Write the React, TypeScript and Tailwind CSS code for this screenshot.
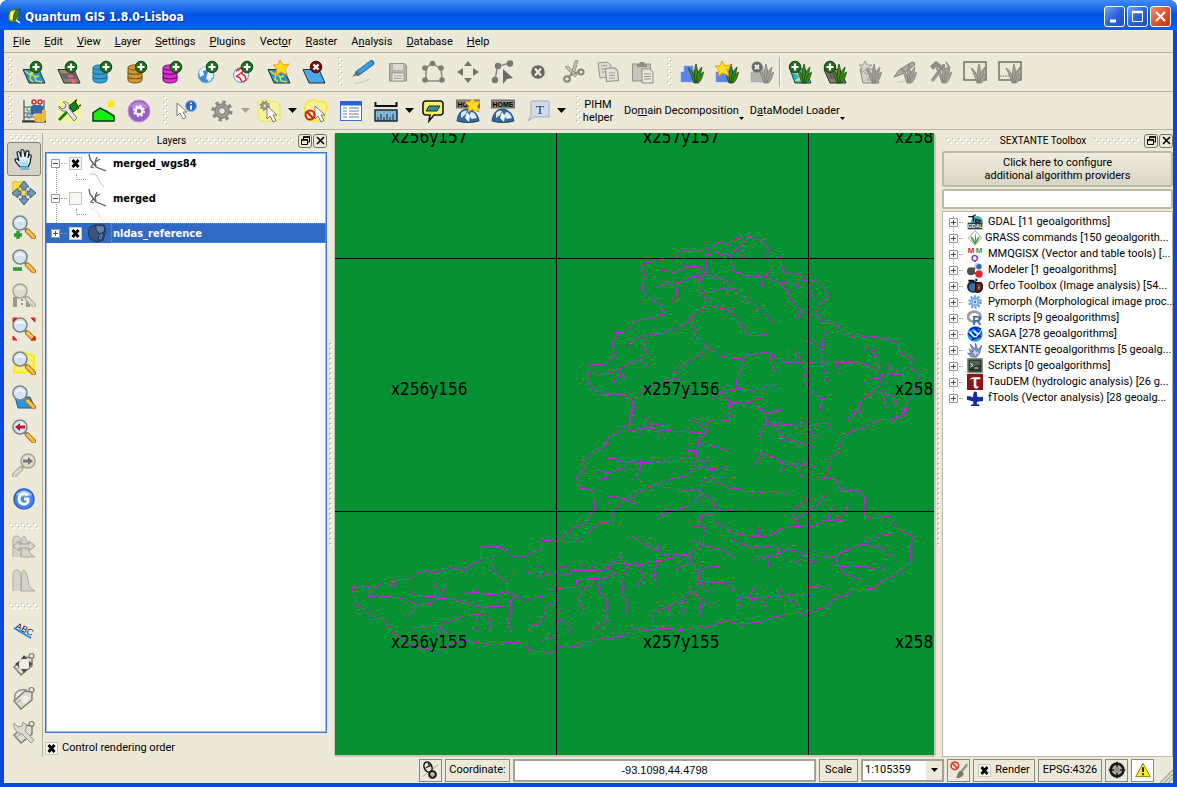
import React, { useState } from "react";

type Kids = { children?: React.ReactNode };

/* ---------- shared pieces ---------- */

function Svg({ children, s = 24 }: Kids & { s?: number }) {
  return (
    <svg width={s} height={s} viewBox="0 0 24 24" fill="none" aria-hidden="true" className="shrink-0">
      {children}
    </svg>
  );
}

function Grip({ id, vertical = false, cls }: { id: string; vertical?: boolean; cls: string }) {
  return (
    <svg className={cls} aria-hidden="true">
      <defs>
        <pattern id={id} width="6" height="6" patternUnits="userSpaceOnUse">
          <rect x="0" y="0" width="2" height="2" fill="#d0cdbf" />
          <rect x="1" y="1" width="2" height="2" fill="#fff" />
          <rect x="3" y="3" width="2" height="2" fill="#d0cdbf" />
          <rect x="4" y="4" width="2" height="2" fill="#fff" />
        </pattern>
      </defs>
      <rect width={vertical ? "6" : "100%"} height={vertical ? "100%" : "6"} fill={`url(#${id})`} />
    </svg>
  );
}

function SplitDots({ id }: { id: string }) {
  return (
    <svg className="h-[204px] w-1" aria-hidden="true">
      <defs>
        <pattern id={id} width="4" height="5" patternUnits="userSpaceOnUse">
          <rect x="0" y="0" width="2" height="2" fill="#b9b6a8" />
          <rect x="1" y="1" width="2" height="2" fill="#fff" />
        </pattern>
      </defs>
      <rect width="4" height="100%" fill={`url(#${id})`} />
    </svg>
  );
}

function Tool({ label, children }: Kids & { label: string }) {
  return (
    <button type="button" aria-label={label} className="flex h-[35px] w-[35px] shrink-0 items-center justify-center">
      {children}
    </button>
  );
}

function Arrow({ label, muted = false }: { label: string; muted?: boolean }) {
  return (
    <button type="button" aria-label={label} className="flex h-[35px] w-3 shrink-0 items-center justify-center">
      <svg width="9" height="5" viewBox="0 0 9 5" aria-hidden="true">
        <path d="M0 0h9L4.500 5z" fill={muted ? "#a5a294" : "#000"} />
      </svg>
    </button>
  );
}

function Tick({ label, defaultChecked, hidden = false }: { label: string; defaultChecked?: boolean; hidden?: boolean }) {
  return (
    <label className="flex items-center">
      <span className="relative flex h-[13px] w-[13px] shrink-0">
        <input
          type="checkbox"
          aria-label={label}
          defaultChecked={defaultChecked}
          className="peer h-[13px] w-[13px] appearance-none border border-[#c9c7ba] bg-[#f6f6f4]"
        />
        <svg viewBox="0 0 13 13" className="pointer-events-none absolute inset-0 hidden h-[13px] w-[13px] peer-checked:block" aria-hidden="true">
          <path d="M3.500 3l6 7M9.500 3l-6 7" stroke="#000" strokeWidth="2.800" />
        </svg>
      </span>
      {!hidden && <span className="pl-1">{label}</span>}
    </label>
  );
}

/* ---------- icon parts ---------- */

const Plus = ({ x = 14, y = 7 }: { x?: number; y?: number }) => (
  <g>
    <circle cx={x} cy={y} r="5.800" fill="#1f6e1f" stroke="#0f4a12" />
    <path d={`M${x - 3.5} ${y}h7M${x} ${y - 3.5}v7`} stroke="#fff" strokeWidth="2.200" />
  </g>
);

const Star = ({ x = 14, y = 8 }: { x?: number; y?: number }) => (
  <path
    transform={`translate(${x} ${y})`}
    d="M-1-8 2-3 8-4 4 1 6 7 0 4-5 7-4 1-8-3-3-3z"
    fill="#ffdf1e"
    stroke="#f49b10"
  />
);

const Sheet = ({ fill = "#3fa9e0" }: { fill?: string }) => (
  <path d="M1 9.500h16l6 13.500H7z" fill={fill} stroke="#20343c" />
);

const Vec = () => (
  <g>
    <Sheet fill="#2f93c9" />
    <path d="M3 11l4 3 3 0 3 3 1 4 6 1M9 14l-1 5 3 3M13 17l4-1M7 14l7-3" stroke="#d7e63c" strokeWidth="1.400" />
  </g>
);

const Ras = () => (
  <g>
    <Sheet fill="#8a7f6a" />
    <path d="M3 10h5l2 4H5z" fill="#b08d5c" />
    <path d="M9 10h4l6 13h-4z" fill="#e0688a" />
    <path d="M5 15h6l1 4H7zM15 13h4l2 4h-4z" fill="#6b5e78" />
    <path d="M13 18l8 0M4 14h15" stroke="#4f4a3e" />
  </g>
);

const Db = ({ a, b }: { a: string; b: string }) => (
  <g>
    <path d="M1 8v12c0 4 14 4 14 0V8z" fill={a} stroke={b} />
    <path d="M1 12c0 3 14 3 14 0M1 16.500c0 3 14 3 14 0" stroke={b} strokeWidth="1.200" />
    <ellipse cx="8" cy="7.500" rx="7" ry="2.600" fill={a} stroke={b} />
  </g>
);

const Grass = ({ c = "#3f8a1e", d = "#1c4a0c" }: { c?: string; d?: string }) => (
  <g fill={c} stroke={d} strokeWidth=".8">
    <path d="M14 23C12 18 11 13 8 8c4 2 7 7 7 15z" />
    <path d="M15 23C14 16 14 10 16 4c2 6 2 12 0 19z" />
    <path d="M16 23c0-7 2-12 6-16-1 5-2 11-5 16z" />
    <path d="M17 23c1-5 3-9 6.500-11-1 5-2 8-5 11z" />
  </g>
);

const gc = "#a3a297";
const gd = "#83827a";

const Glass = ({ muted = false, flip = false }: { muted?: boolean; flip?: boolean }) => (
  <g transform={flip ? "translate(24 0) scale(-1 1)" : undefined}>
    <path d="M12.500 13l3.500 3.500" stroke={muted ? "#a9a79b" : "#8b8b83"} strokeWidth="3" />
    <path d="M15.500 16l6 6" stroke={muted ? "#a3a195" : "#a36a14"} strokeWidth="5" strokeLinecap="round" />
    <path d="M15.500 16l6 6" stroke={muted ? "#d5d3c6" : "#f7b53c"} strokeWidth="3.200" strokeLinecap="round" />
    <path d="M15.500 15.200l5 5" stroke={muted ? "#e8e6da" : "#fde3a0"} strokeWidth="1" />
    <circle cx="8" cy="8" r="7" fill={muted ? "#dedccf" : "#d3e3f2"} stroke={muted ? "#a6a499" : "#7d8588"} strokeWidth="1.600" />
    <path d="M3 8c1-5 8-6 10-1-3-1-7-1-10 1z" fill={muted ? "#eceadf" : "#f4f9fd"} />
  </g>
);

const Globe = () => (
  <g>
    <circle cx="9" cy="15" r="8" fill="#3c8fd0" stroke="#8fb8da" />
    <path d="M2 12c2-4 5-5 8-5l-1 3-3 1 1 4-4 2zM11 12l5 0 0 5-4 5-3-4z" fill="#eaf4fb" />
  </g>
);

const Tag = () => (
  <g>
    <circle cx="19.500" cy="4" r="2.500" stroke="#7b7a72" strokeWidth="1.200" />
    <path d="M2 15L13 5l7 1 0 8-11 9z" fill="#dedcd0" stroke="#7b7a72" strokeWidth="1.400" />
    <path d="M2 15l7 7M4 18l10-9" stroke="#98968b" />
  </g>
);

const Home = () => (
  <g>
    <path d="M1 22c1-8 5-12 10-12s11 4 12 12c-6 2-16 2-22 0z" fill="#34689b" stroke="#234a74" />
    <path d="M5 14c3-3 5-3 6-2l-2 4-4 3zM15 13c3 0 5 3 6 6l-5 1-3-3z" fill="#dceaf5" />
    <path d="M11 13l3 4-1 6-4-4z" fill="#f5f9fc" />
    <rect x=".5" y="1" width="23" height="8" fill="#8d8b81" stroke="#6f6d64" />
    <text x="12" y="7.600" textAnchor="middle" fontSize="7" fontWeight="700" fontFamily="Liberation Sans, sans-serif" fill="#000">
      HOME
    </text>
  </g>
);

const Cursor = ({ x = 9, y = 8 }: { x?: number; y?: number }) => (
  <path transform={`translate(${x} ${y})`} d="M0 0v13l3-3 3 6 3-1.500-3-5.500h4z" fill="#fff" stroke="#777" />
);

const Gear = ({ r = 0.9 }: { r?: number }) => (
  <g transform={`translate(12 12) scale(${r})`}>
    <circle r="9.800" stroke="#8b8a82" strokeWidth="4" strokeDasharray="3.700 4" />
    <circle r="6.500" stroke="#8b8a82" strokeWidth="4.500" />
    <circle r="6" stroke="#a9a89f" strokeWidth="1.500" />
    <circle r="3.800" stroke="#64635c" strokeWidth="1" />
  </g>
);

/* ---------- toolbars ---------- */

const fileTools: [string, React.ReactNode][] = [
  ["Add Vector Layer", <><Vec /><Plus /></>],
  ["Add Raster Layer", <><Ras /><Plus /></>],
  ["Add PostGIS Layer", <><Db a="#3aa0d4" b="#1c6f9d" /><Plus /></>],
  ["Add SpatiaLite Layer", <><Db a="#cf9a34" b="#7d5310" /><Plus /></>],
  ["Add MSSQL Layer", <><Db a="#dc2fd6" b="#6c0e69" /><Plus /></>],
  ["Add WMS Layer", <><Globe /><Plus x={15} /></>],
  [
    "Add WFS Layer",
    <>
      <circle cx="9" cy="15" r="7.500" fill="#f7f4fa" stroke="#6b8ed0" />
      <path d="M4 11l5-3 4 2-4 3 4 3 1 4-3 2M4 16l4 2 2 4M9 13l-4 3" stroke="#e0222c" strokeWidth="1.500" />
      <Plus x={15} />
    </>,
  ],
  ["New Shapefile Layer", <><Vec /><Star /></>],
  ["Remove Layer", <><Sheet fill="#4aa9e4" /><circle cx="14" cy="7" r="5.800" fill="#7d1016" stroke="#4b070a" /><path d="M11.500 4.500l5 5M16.500 4.500l-5 5" stroke="#fff" strokeWidth="2.200" /></>],
];

const editTools: [string, React.ReactNode][] = [
  [
    "Toggle Editing",
    <>
      <path d="M3 23c8 0 12-2 16-4" stroke="#d3d1c4" strokeWidth="1.500" />
      <path d="M20.500 3L7 13" stroke="#2067a8" strokeWidth="5.500" strokeLinecap="round" />
      <path d="M20 3L7 13" stroke="#3d9de8" strokeWidth="4" strokeLinecap="round" />
      <path d="M6 11L1 17l8-3z" fill="#5c6a74" />
    </>,
  ],
  [
    "Save Edits",
    <>
      <path d="M3.500 3.500h15l2 2V21h-17z" fill="#b6b5ab" stroke="#96958c" />
      <path d="M7 4h10v6H7z" fill="#dddbcf" />
      <path d="M6 13h12v8H6z" fill="#e8e6db" stroke="#9c9b92" />
      <path d="M8 16h8M8 18.500h8" stroke="#a09f95" />
    </>,
  ],
  [
    "Capture Polygon",
    <>
      <path d="M4 9L11 3l9 6M5 9v12l15 0M20 8l1 12" stroke="#8b8a82" strokeWidth="1.500" />
      <g fill="#7f7e76">
        <circle cx="11.500" cy="3.500" r="2.800" /><circle cx="4" cy="8" r="2.800" /><circle cx="20" cy="8" r="2.800" /><circle cx="4" cy="20" r="2.800" /><circle cx="21" cy="20" r="2.800" />
      </g>
    </>,
  ],
  ["Move Feature", <path d="M12 1l4 5H8zM12 23l4-5H8zM1 12l6-4v8zM23 12l-6-4v8z" fill="#73726a" />],
  [
    "Node Tool",
    <>
      <path d="M8 6l11-3M6 9L4 20" stroke="#8b8a82" strokeWidth="1.500" />
      <path d="M12 9l10 9-6 1-4 5z" fill="#6c6b64" />
      <g fill="#7a7971"><circle cx="7" cy="6" r="3.200" /><circle cx="19" cy="3.500" r="3.200" /><circle cx="4" cy="20" r="3.200" /></g>
    </>,
  ],
  ["Delete Selected", <><circle cx="12" cy="12" r="9" fill="#e6e4d8" /><circle cx="12" cy="12" r="6.800" fill="#66655f" /><path d="M9 8.500l6 7M15 8.500l-6 7" stroke="#eeece0" strokeWidth="2.200" /></>],
  ["Cut Features", <><path d="M4 7l3-1 9 9-2 2zM14 1l3-1-4 15-3 0z" fill="#c4c2b6" stroke="#99978c" /><circle cx="6" cy="19" r="2.800" stroke="#85847b" strokeWidth="2" /><circle cx="20" cy="12" r="2.600" stroke="#85847b" strokeWidth="2" /><path d="M11 13l-3 4M14 13l4-1" stroke="#85847b" strokeWidth="2" /></>],
  [
    "Copy Features",
    <>
      <path d="M2 3l9-1 4 3v12l-11 1z" fill="#dddbcf" stroke="#98968c" />
      <path d="M10 8h9l3 3v10H10z" fill="#e4e2d7" stroke="#8d8c83" transform="rotate(-5 16 15)" />
      <path d="M5 6l6-.5M5 9h6M6 12h4M13 13h6M13 15.500h6M13 18h6" stroke="#a4a298" />
    </>,
  ],
  ["Paste Features", <><rect x="1.500" y="4" width="18" height="17" fill="#c7c5b9" stroke="#94938a" /><path d="M6 4h2l1-2h4l1 2h2v3H6z" fill="#8f8e85" /><path d="M11 9h8l3 3v11H11z" fill="#e9e7dc" stroke="#8d8c83" /><path d="M13 14h7M13 16.500h7M13 19h7" stroke="#96958b" /></>],
];

const Folder = ({ c = "#5b84ec" }: { c?: string }) => <path d="M1 22V12h3V6h9v4h5v12z" fill={c} stroke="#7f9cf0" strokeWidth=".5" />;

const grassTools: [string, React.ReactNode][] = [
  ["Open Mapset", <><Folder /><Grass /></>],
  ["New Mapset", <><Folder /><Grass /><Star x={8} y={9} /></>],
  ["Close Mapset", <><Folder c="#b5b4a9" /><Grass c={gc} d={gd} /><circle cx="7" cy="7" r="5.500" fill="#6c6b65" /><path d="M5 5l4 4M9 5l-4 4" stroke="#eee" strokeWidth="2" /></>],
];

const grassTools2: [string, React.ReactNode][] = [
  ["Add GRASS Vector", <><path d="M2 9h15l6 14H7z" fill="#25b5e8" stroke="#20343c" /><path d="M6 13c5 0 8 4 3 7h8" stroke="#e3ef3a" strokeWidth="1.500" /><Grass /><Plus x={7} y={7} /></>],
  ["Add GRASS Raster", <><Ras /><Grass /><Plus x={7} y={7} /></>],
  ["Create GRASS Vector", <><path d="M2 9h15l4 14H5z" fill="#d2d0c4" stroke="#8f8e85" /><path d="M6 13c5 0 8 4 3 7h8" stroke="#a5a399" /><path d="M7 1l2 4h5l-4 3 1 5-4-3-4 3 1-5-3-3h4z" fill="#d9d7cb" stroke="#a09e93" /><Grass c={gc} d={gd} /></>],
  ["Edit GRASS Vector", <><path d="M4 22c5 0 8-1 12-2" stroke="#d0cec2" strokeWidth="1.500" /><path d="M1 17L6 10l13-8q3 0 3 3L9 14z" fill="#aeada3" stroke="#85847b" /><Grass c={gc} d={gd} /></>],
  ["GRASS Tools", <><path d="M4 21L16 5" stroke="#98978d" strokeWidth="3.500" /><path d="M2 6l6-5 8 6-3 3-5-3-3 3z" fill="#8e8d84" /><path d="M18 2l3 5-4 3" stroke="#98978d" strokeWidth="2" /><Grass c={gc} d={gd} /></>],
  ["Display GRASS Region", <><rect x="1" y="2" width="22" height="18" stroke="#73726a" strokeWidth="1.500" /><Grass c={gc} d={gd} /></>],
  ["Edit GRASS Region", <><rect x="1" y="2" width="22" height="18" stroke="#73726a" strokeWidth="1.500" /><path d="M2 16h13" stroke="#73726a" strokeDasharray="1.500 1" /><Grass c={gc} d={gd} /></>],
];

function Tools({ items }: { items: [string, React.ReactNode][] }) {
  return (
    <>
      {items.map(([label, art]) => (
        <Tool key={label} label={label}>
          <Svg>{art}</Svg>
        </Tool>
      ))}
    </>
  );
}

const pluginTools: [string, React.ReactNode][] = [
  [
    "Python Console",
    <>
      <path d="M2 1v21h20V1M2 8h20M2 14h20M2 18h20" stroke="#55544e" strokeWidth="1.200" />
      <path d="M0 22.500h24" stroke="#333" strokeWidth="2" />
      <g strokeWidth="1.500"><circle cx="12" cy="3" r="2" stroke="#d3222a" /><circle cx="18" cy="3" r="2" stroke="#d3222a" /><circle cx="7" cy="10" r="2" stroke="#5fae9a" /><circle cx="7" cy="17" r="2" stroke="#4b9ad0" /></g>
      <path d="M9 15V9q0-3 3-3h6q3 0 3 3v5h-7q-3 0-3 3z" fill="#3465a4" />
      <path d="M24 13v6q0 4-3 4h-6q-3 0-3-3v-3q0-2 3-2h5v-4q4-1 4 2z" fill="#f0b93a" />
    </>,
  ],
  [
    "Plugin Manager",
    <>
      <rect width="24" height="24" rx="5" fill="#f6f3a8" />
      <path d="M2 21L14 9" stroke="#1c7d1c" strokeWidth="3" />
      <path d="M12 7l6-5 4 7-6 4z" fill="#168016" stroke="#0b3f0b" /><path d="M18 2l2-1M22 7l2-1" stroke="#222" strokeWidth="1.500" />
      <path d="M2 7l3 3 3-1 1-3-3-3c3-1 7 1 6 6l8 10-3 3-8-10C5 13 2 10 2 7z" fill="#e6e6e6" stroke="#777" />
    </>,
  ],
  ["Profile", <><path d="M1 22V14l7-5 6 3 8 5v5z" fill="#10ee10" stroke="#0a3b0a" strokeWidth="1.500" /><circle cx="19" cy="5" r="3" fill="#ffee1a" /><path d="M19 0v10M14 5h9M15.500 1.500l7 7M22.500 1.500l-7 7" stroke="#ffe800" /></>],
  ["Settings Tool", <><circle cx="12" cy="12" r="11" fill="#9a5fc0" stroke="#b99ad0" /><path d="M3 8c5-7 14-6 18 0-5 3-12 3-18 0z" fill="#b98bd6" /><circle cx="12" cy="12" r="3.500" stroke="#fff" strokeWidth="2.400" /><circle cx="12" cy="12" r="5.200" stroke="#fff" strokeWidth="1.600" strokeDasharray="2 2.080" /></>],
];

/* ---------- map ---------- */

const riversTop = [
  "M240 345 210 350 190 362 175 375M225 350 220 365 230 395 210 415 150 445 120 458 88 463M212 417 230 440M150 445 155 465 133 480 130 495M155 460 167 478",
  "M182 600 180 575 194 560 190 545 165 522 95 522 50 488 55 440 70 433 100 433 135 405 128 378 140 337 165 335 195 305 225 298 285 282 265 248 240 238 218 210 225 170 210 140 225 128 265 125 278 115 308 117 345 86 352 94 385 93 455 65 468 74 500 55 535 47 580 66 600 90 582 106 592 117 620 115 630 110 640 155 690 163 700 180 742 187 765 210 775 230 735 270 738 285 765 304 795 310 832 347 905 349 940 358 980 365 990 400 1030 412 1022 440 1047 470 1030 500 1040 525 1012 540 1010 575 970 600",
  "M400 105 415 104 440 98 478 102 515 75 535 47M503 83 508 100 525 115M478 102 485 120 488 150 530 168 590 170 625 190 655 210 662 240 690 270 710 280 725 290M690 272 686 295M565 170 578 183 578 200M583 168 605 148M625 190 650 187 710 203 732 228",
  "M412 105 408 145 400 170 385 185 392 215 408 235 398 270 362 290 365 310 380 350 405 375 435 397 462 410 515 415 540 402 600 400 640 425 720 427 800 424 885 432 920 448 937 470 920 508 873 540 866 570 835 600",
  "M408 163 385 140 350 138 338 134M355 142 310 156 273 151M405 160 440 172 480 188M400 165 365 170 340 184 295 188 260 203M325 184 318 210 318 230 307 241",
  "M400 217 440 208 495 208 540 245 575 270 597 300 608 305M408 240 425 258 475 270 500 298 538 345 593 344M475 272 490 262M362 300 345 308 315 328 285 332 280 340 245 341 238 348M405 375 395 400 380 410 312 458 305 445M312 458 308 475 250 495 205 520M308 470 335 485M335 535 360 510",
  "M515 415 520 430 515 450 500 475 500 505 550 515 590 495 620 495M500 508 460 512 425 535M450 512 478 548 478 600M478 548 530 550 560 535 580 532M550 548 583 575 588 600M583 575 605 580 632 572M600 402 605 430 620 458M683 422 685 410 673 395",
  "M772 332 755 355 757 375 752 395 760 425M718 357 750 383M715 430 705 480 720 515 750 535 785 538M752 535 752 568M715 520 714 538M758 430 762 455 770 482M800 425 805 453M832 430 840 420",
  "M880 378 910 400 928 445M910 413 928 402M910 400 912 388M938 466 965 463 1000 460 1005 490M955 432 960 462M978 448 975 463M937 474 895 477 880 487M925 508 943 535 950 562M930 508 970 532 978 555M866 568 875 580M222 588 225 600M365 600 410 597",
];
const riversMid = [
  "M170 0 192 18 180 50 180 70 150 92 108 120 110 135 75 155 37 185 45 205 17 233 30 265 68 270 72 330 40 370 0 392M480 0 478 72M478 10 545 8 585 40 590 70 570 100 575 155 553 200M588 38 632 32M478 62 435 57 408 68 410 95 385 120 382 175 375 200 345 232 300 237 215 270 170 300 130 330 120 370 90 370 60 390 20 425 0 425M365 60 408 88M410 98 330 97 275 87 215 85 170 93M275 87 262 112M280 87 275 65M222 50 240 72 218 88 203 107M250 72 275 76",
  "M385 130 430 140 470 152M380 155 345 178 275 190 195 187 115 175M380 150 345 150M210 178 210 205 198 235M185 187 150 205 115 217 75 217M112 217 108 235 82 240M382 178 400 185 415 180M375 200 420 205 465 200M400 208 428 212 428 235 460 232M425 230 395 250 388 275 405 287 432 310 430 365 490 400 560 410 600 405 640 382 680 378 725 378 775 360 820 362M330 270 385 270M428 240 480 265 540 275 615 275 655 287M545 275 557 295",
  "M112 290 150 292 185 300 198 312M388 287 370 315 300 332 262 352M282 322 300 332M432 333 490 335 500 330M388 380 372 378M430 343 390 345 388 370 403 385 400 432 350 465 265 482 190 497 135 487 90 512 0 512M182 403 225 430 280 465 350 463M252 410 265 450M360 420 400 435 460 450 497 475M545 408 565 405 567 373M605 405 632 385",
  "M592 72 650 72 715 75 775 70 780 85M600 75 630 95 638 125M630 105 680 125 728 138M575 155 635 182 640 192 710 190 735 202M632 185 640 220M675 192 690 225 700 228M700 190 712 182M715 80 720 97 745 110",
  "M1010 0 1005 40 970 62 925 60 885 80 840 98 808 130 805 155 768 180 775 205 757 235 795 238 815 270 865 270 882 290 882 345 895 355 960 350 975 380 1030 407 1018 440 1022 485 985 525 935 540 915 567 850 570 790 597 765 620 712 640 630 645 560 668 515 672 465 660 430 677 330 690 270 685 220 695 195 683 160 710 100 715 40 725 0 742",
  "M755 0 750 25M870 0 866 30 828 57M945 0 950 22M978 0 982 18M775 280 735 320 680 357 680 380M715 292 680 320 665 350 680 360M775 357 780 332 795 315M795 357 830 330 840 310",
  "M488 400 500 430 545 442 620 437 632 460 640 450 710 460 730 485 765 470 790 470 870 432 942 400 970 405M620 440 628 465 575 470 553 482M595 467 595 500M725 455 700 465 695 478 672 485M722 470 720 490M822 422 830 450M868 432 935 440 950 460 970 467M790 470 812 498 870 500 947 507M805 498 825 525 875 537",
  "M360 463 362 485 385 510 388 545 465 547 490 570 510 590 565 595 640 585 710 583 720 558 770 562M362 488 320 505 322 527M385 510 420 497 445 500M388 545 420 578M388 550 365 575 325 605 260 630 248 657M292 620 300 650M335 600 343 640M370 573 390 595 390 650M390 600 422 615M488 545 495 580M510 590 510 610 500 632M530 595 558 560M540 595 550 608M570 592 588 625M632 583 635 560M655 583 663 610 682 617",
  "M32 485 40 510M70 490 60 510M155 455 150 470 175 497 160 525 155 580 168 600 170 642M190 480 215 515 222 530 205 550 208 565M260 485 252 510 260 553M105 495 135 520 90 540 85 570 110 600 113 655 80 685M115 655 118 675 128 685M80 540 35 575 22 595 40 625 35 652M90 535 20 540 15 562 0 563",
];
const riversLow = [
  "M48 258 120 262 145 250 180 258 175 240 225 237 240 220 280 210 308 220 312 212 345 200 392 215 410 190 437 180 440 138 495 140 540 170 575 165 620 148 622 122 665 120 705 97",
  "M48 258 50 280 62 290 65 315 105 342 155 367 162 390 210 425 265 448 315 449 350 430 400 420 475 437 510 428 570 430 585 450 640 460 680 440 705 440",
  "M93 287 200 295 255 315 315 297M223 265 245 285 310 295 380 305 430 320 500 320 527 315 535 290 580 300 640 285 665 265 722 262M290 247 312 278 312 297M340 238 325 268 312 290M245 312 232 335 215 352M283 320 285 312",
  "M463 170 485 222 515 240 517 275 470 283 420 278 393 277M425 265 425 280M517 275 545 290M527 295 525 350 518 370 525 387M445 325 435 342 375 352 315 375 230 387M445 340 465 360 468 393M430 342 420 365 423 387M315 375 308 412M315 388 340 400",
  "M563 203 600 228 700 222 720 208M600 190 630 220M670 195 715 208M665 270 660 300 675 330 668 385 650 415 620 420M660 305 630 320 628 350 610 370 580 375M670 350 695 370 710 403M686 127 720 125",
];

/* Turns a coarse stream trace into a one-pixel-wide line with a small meander. */
function meander(d: string, dx: number, dy: number): string {
  let seed = d.length * 7 + 3;
  const rnd = () => {
    seed = (seed * 1103515245 + 12345) % 2147483648;
    return seed / 2147483648 - 0.5;
  };
  let out = "";
  let x = 0;
  let y = 0;
  const walk = (tx: number, ty: number) => {
    const n = Math.max(Math.abs(tx - x), Math.abs(ty - y));
    for (let i = 1; i <= n; i++) {
      out += `M${Math.round(x + ((tx - x) * i) / n)} ${Math.round(y + ((ty - y) * i) / n)}h1v1h-1z`;
    }
    x = tx;
    y = ty;
  };
  for (const part of d.split("M").filter(Boolean)) {
    const n = part.trim().split(/\s+/).map(Number);
    x = Math.floor(n[0] / 3 + dx);
    y = Math.floor(n[1] / 3 + dy);
    for (let i = 2; i < n.length; i += 2) {
      const ax = n[i - 2] / 3 + dx;
      const ay = n[i - 1] / 3 + dy;
      const bx = n[i] / 3 + dx;
      const by = n[i + 1] / 3 + dy;
      const steps = Math.max(1, Math.round(Math.hypot(bx - ax, by - ay) / 4));
      for (let s = 1; s <= steps; s++) {
        const t = s / steps;
        const k = s === steps ? 0 : 2;
        walk(Math.floor(ax + (bx - ax) * t + rnd() * k), Math.floor(ay + (by - ay) * t + rnd() * k));
      }
    }
  }
  return out;
}

const streams = [
  ...riversTop.map((d) => meander(d, 235, 87)),
  ...riversMid.map((d) => meander(d, 235, 267)),
  ...riversLow.map((d) => meander(d, 0, 367)),
];

const mapLabels: [number, number, string][] = [
  [56, 10, "x256y157"], [308, 10, "x257y157"], [560, 10, "x258"],
  [56, 262, "x256y156"], [308, 262, "x257y156"], [560, 262, "x258"],
  [56, 515, "x256y155"], [308, 515, "x257y155"], [560, 515, "x258"],
];

function MapCanvas() {
  return (
    <svg className="block h-full w-full bg-[#049033]" role="img" aria-label="Map canvas">
      <g fill="#c81ee0" shapeRendering="crispEdges">
        {streams.map((d, i) => (
          <path key={i} d={d} />
        ))}
      </g>
      <g fill="#000">
        <rect x="0" y="125" width="100%" height="1" />
        <rect x="0" y="378" width="100%" height="1" />
        <rect x="221" y="0" width="1" height="100%" />
        <rect x="473" y="0" width="1" height="100%" />
      </g>
      <g fill="#000" fontSize="17" fontFamily="'DejaVu Sans Condensed','DejaVu Sans',sans-serif">
        {mapLabels.map(([x, y, t]) => (
          <text key={`${x}-${y}`} x={x} y={y}>{t}</text>
        ))}
      </g>
    </svg>
  );
}

/* ---------- docks ---------- */

function DockTitle({ title, id }: { title: string; id: string }) {
  const btn = "flex h-[14px] w-[14px] items-center justify-center rounded-[3px] border border-[#77756a] bg-[#ece9d8]";
  return (
    <header className="flex h-[15px] shrink-0 items-center pl-1 text-[10px]">
      <Grip id={`${id}a`} cls="h-[6px] min-w-0 flex-1" />
      <h2 className="px-2">{title}</h2>
      <Grip id={`${id}b`} cls="h-[6px] min-w-0 flex-1" />
      <div className="flex gap-px pl-1">
        <button type="button" aria-label={`Float ${title}`} className={btn}>
          <svg width="9" height="9" viewBox="0 0 9 9" aria-hidden="true">
            <path d="M2.500 3V1h6v5H6.500M.5 3.500h6v5h-6z" fill="none" stroke="#000" />
            <path d="M0 4h7M2 1h7" stroke="#000" strokeWidth="1.500" />
          </svg>
        </button>
        <button type="button" aria-label={`Close ${title}`} className={btn}>
          <svg width="9" height="9" viewBox="0 0 9 9" aria-hidden="true">
            <path d="M1 1l7 7M8 1L1 8" stroke="#000" strokeWidth="1.600" />
          </svg>
        </button>
      </div>
    </header>
  );
}

function Expander({ label, initial = false }: { label: string; initial?: boolean }) {
  const [open, setOpen] = useState(initial);
  return (
    <button type="button" aria-label={`Expand ${label}`} aria-expanded={open} onClick={() => setOpen(!open)} className="relative h-[9px] w-[9px] shrink-0 bg-white">
      <svg width="9" height="9" viewBox="0 0 9 9" className="block" aria-hidden="true">
        <path d="M.5 .5h8v8h-8z" fill="#fff" stroke="#9b998d" />
        <path d={open ? "M2 4.500h5" : "M2 4.500h5M4.500 2v5"} stroke="#4a4a46" />
      </svg>
    </button>
  );
}

const Line = () => (
  <svg width="18" height="20" viewBox="0 0 18 20" fill="none" stroke="#5d605c" strokeWidth="1.300" aria-hidden="true">
    <path d="M1 1l1 5 3 4 3 4 10 4M8 13L7 9l2-5M7 9l5-3M5 11l-2 3 3 1" />
  </svg>
);

function LayerRow({ name, checked, open, selected, art }: { name: string; checked?: boolean; open?: boolean; selected?: boolean; art: React.ReactNode }) {
  return (
    <div className={selected ? "flex h-5 items-center bg-[#316ac5] text-white" : "flex h-5 items-center"}>
      <div className="flex w-[23px] items-center pl-[5px]">
        <Expander label={name} initial={open} />
        <span className="ml-px w-[6px] border-t border-dotted border-[#a5a294]" />
      </div>
      <Tick label={name} defaultChecked={checked} hidden />
      <span className="flex w-[29px] justify-center">{art}</span>
      <span
        className={
          selected
            ? "flex h-5 flex-1 items-center border border-dotted border-[#c8843c] pt-0.5 pl-px font-bold"
            : "flex h-5 flex-1 items-center pt-0.5 pl-0.5 font-bold"
        }
      >
        {name}
      </span>
    </div>
  );
}

function LayerSymbol({ color }: { color: string }) {
  return (
    <div className="flex h-[15px] pl-[30px]">
      <span className="mt-px h-[6px] w-[10px] border-b border-l border-dotted border-[#a5a294]" />
      <svg width="18" height="15" viewBox="0 0 18 15" fill="none" className="ml-[3px]" aria-hidden="true">
        <path d="M1 1h4q3 0 4 4t6 9" stroke={color} />
      </svg>
    </div>
  );
}

function LayersDock() {
  return (
    <section className="flex w-[284px] shrink-0 flex-col pl-0.5 text-[11px]">
      <DockTitle title="Layers" id="gl" />
      <div className="relative mt-1 flex-1 border border-[#3c78cc] bg-white outline outline-1 -outline-offset-2 outline-[#9cbce8]">
        <div className="absolute top-3 left-[10px] h-[68px] border-l border-dotted border-[#a5a294]" />
        <div className="relative font-['DejaVu_Sans_Condensed']">
          <LayerRow name="merged_wgs84" checked open art={<Line />} />
          <LayerSymbol color="#eeaaf4" />
          <LayerRow name="merged" open art={<Line />} />
          <LayerSymbol color="#f5dcdc" />
          <LayerRow
            name="nldas_reference"
            checked
            selected
            art={
              <svg width="18" height="19" viewBox="0 0 18 19" aria-hidden="true">
                <path d="M2 3l5-2 9 0 2 6-3 9-6 2-7-3-2-6z" fill="#38547f" stroke="#1f3353" />
                <path d="M8 1l8 1 1 5-5 3-4-4z" fill="#647fa9" stroke="#1f3353" />
                <path d="M11 10l5-1-2 7-4 0z" fill="#54719c" stroke="#1f3353" />
              </svg>
            }
          />
        </div>
      </div>
      <div className="flex h-6 items-center pt-1.5">
        <Tick label="Control rendering order" defaultChecked />
      </div>
    </section>
  );
}

const b = { fontFamily: "Liberation Sans, sans-serif", fontWeight: 700 };

const providers: [string, React.ReactNode][] = [
  ["GDAL [11 geoalgorithms]", <><circle cx="15" cy="12" r="9" fill="#4aa6c8" /><path d="M2 4h7l4-3M9 4l1 7M13 8l7 2-3 4-4-2z" stroke="#151515" fill="#3f9a50" strokeWidth="2" /><path d="M1 13h22v10H1z" fill="#2c3c3e" /><text x="1" y="21" fontSize="8" fill="#fff" {...b}>GDAL</text></>],
  ["GRASS commands [150 geoalgorith...", <><path d="M12 1l10 11-10 11L2 12z" fill="#fff" stroke="#aaa" strokeWidth="1.500" /><path d="M12 22C8 16 5 12 5 9c4 2 6 5 7 9V5c2 4 2 9 1 13 1-4 3-7 6-9 0 4-3 8-7 13z" fill="#3fa045" /></>],
  ["MMQGISX (Vector and table tools) [...", <><text x="1" y="10" fontSize="12" fill="#d0202a" {...b}>M</text><text x="13" y="10" fontSize="12" fill="#2ba35a" {...b}>M</text><text x="6" y="22" fontSize="14" fill="#6a2ad8" {...b}>Q</text></>],
  ["Modeler [1 geoalgorithms]", <><path d="M5 14L17 5M7 15l11 4" stroke="#555" strokeWidth="3" /><circle cx="6" cy="14" r="6" fill="#4b4f52" /><circle cx="16" cy="6" r="5" fill="#c9d2dc" /><circle cx="18" cy="7" r="4" fill="#2a68c8" /><circle cx="18" cy="18" r="5.500" fill="#e3262b" /></>],
  ["Orfeo Toolbox (Image analysis) [54...", <><circle cx="9" cy="13" r="9" fill="#1b2432" /><circle cx="9" cy="14" r="6" fill="#3c6fa8" /><path d="M13 7h8q4 5 1 11-4 5-9 3z" fill="#8f1520" stroke="#111" strokeWidth="2" /><path d="M16 11l4 3-3 4z" fill="#46b04c" /><path d="M2 4h9M14 5V1" stroke="#111" strokeWidth="3" /></>],
  ["Pymorph (Morphological image proc...", <g transform="translate(12 12) scale(.85)"><circle r="10" stroke="#5f97d8" strokeWidth="4" strokeDasharray="3.500 2.800" /><circle r="6.500" stroke="#7fb1e6" strokeWidth="5" /><circle r="2.500" fill="#3f78bf" /></g>],
  ["R scripts [9 geoalgorithms]", <><ellipse cx="11" cy="10" rx="9.500" ry="7.500" stroke="#9a9ca4" strokeWidth="4" /><text x="8" y="22" fontSize="19" fill="#41649e" {...b}>R</text></>],
  ["SAGA [278 geoalgorithms]", <><circle cx="12" cy="12" r="11.500" fill="#12a7f2" /><path d="M4 6c6-5 12-4 17-1M2 11l7 7h5l8-9M8 9l8 8M7 21l14-6M12 4l8 6" stroke="#0a1dc0" strokeWidth="2.500" /><path d="M4 9l6 7h4l7-8M10 7l7 6" stroke="#fff" strokeWidth="2" /></>],
  ["SEXTANTE geoalgorithms [5 geoalg...", <><path d="M3 10l6 5L5 3l7 8 1-9 3 10 6-7-3 12-5 6-8-1-5-5 5 0z" fill="#7f9cc8" stroke="#3d5684" /><path d="M9 16l9 1M11 12l2 8" stroke="#dfe8f6" strokeWidth="1.500" /></>],
  ["Scripts [0 geoalgorithms]", <><rect x="1" y="1" width="22" height="21" rx="2" fill="#26352a" stroke="#8b8f88" strokeWidth="2.500" /><path d="M4 4h16v6L4 14z" fill="#4f6353" /><path d="M5 8l4 3-4 3M11 15h6" stroke="#e5efe5" strokeWidth="1.500" /></>],
  ["TauDEM (hydrologic analysis) [26 g...", <><rect width="24" height="24" fill="#8c1414" /><path d="M4 9q1-4 5-4h11v3h-6v9q0 3 4 1-1 4-4 4-4 0-4-5V8Q6 7 4 9z" fill="#fff" /></>],
  ["fTools (Vector analysis) [28 geoalg...", <><path d="M0 10h5l4 2 2-9h3l1 8h9v5l-9 1-1 5h4v2H7v-2h3v-5l-10-3z" fill="#0c2fae" stroke="#071a63" /></>],
];

function ToolboxDock() {
  return (
    <section className="flex w-[231px] shrink-0 flex-col text-[11px]">
      <DockTitle title="SEXTANTE Toolbox" id="gs" />
      <button type="button" className="mt-[3px] h-[36px] shrink-0 rounded-[3px] border-2 border-[#bcb9a9] bg-linear-to-b from-[#efecdf] to-[#d9d5c4] leading-[13px]">
        Click here to configure
        <br />
        additional algorithm providers
      </button>
      <input aria-label="Search algorithms" className="mt-0.5 h-5 w-full min-w-0 shrink-0 rounded-[2px] border-2 border-[#bcb9a9] bg-white px-1" />
      <div className="relative mt-0.5 min-h-0 flex-1 border border-[#bcb9a9] bg-white pt-0.5 pl-[6px]">
        <div className="absolute top-1 left-[10px] h-[186px] border-l border-dotted border-[#a5a294]" />
        <ul className="relative">
          {providers.map(([name, art], i) => (
            <li key={name} className="flex h-4 items-center">
              <Expander label={name} />
              <span className="mr-1 ml-px w-1 shrink-0 border-t border-dotted border-[#a5a294]" />
              <Svg s={16}>{art}</Svg>
              <span className={i === 1 ? "pl-0.5 whitespace-nowrap" : "pl-[5px] whitespace-nowrap"}>{name}</span>
            </li>
          ))}
        </ul>
      </div>
    </section>
  );
}

/* ---------- left tool column ---------- */

const navTools: [string, React.ReactNode][] = [
  ["Pan Map to Selection", <><path d="M1 1h16v17H1z" fill="#fbe33c" stroke="#b29a20" strokeDasharray="2 1" transform="scale(.8)" /><path d="M12 0l5 6h-3v3h-4V6H7zM12 24l5-6h-3v-3h-4v3H7zM0 12l6-5v3h3v4H6v3zM24 12l-6-5v3h-3v4h3v3z" fill="#7296b4" stroke="#40607e" /></>],
  ["Zoom In", <><Glass /><path d="M2 20h8M6 16v8" stroke="#2f9a2f" strokeWidth="3.400" /></>],
  ["Zoom Out", <><Glass /><path d="M1 20h9" stroke="#2f9a2f" strokeWidth="3.600" /></>],
  ["Zoom to Native Resolution", <><path d="M1 14h4v10H1zM14 14h4v10h-4zM9 16h2v2H9zM9 20h2v2H9z" fill="#9b998e" /><Glass muted /></>],
  ["Zoom Full", <><Glass /><path d="M1 1h4L1 5zM23 1h-4l4 4zM1 23h4l-4-4zM23 23h-4l4-4z" fill="#e01f26" stroke="#e01f26" /></>],
  ["Zoom to Selection", <><path d="M3 3c8-2 13-1 19 2l0 14c-6 3-14 3-20 2z" fill="#f6f07a" stroke="#f8ee10" strokeWidth="2" /><Glass /></>],
  ["Zoom to Layer", <><path d="M3 12h15l5 11H6z" fill="#2a98d8" stroke="#1c5f86" /><Glass /></>],
  ["Zoom Last", <><Glass /><path d="M3 8l5-4v2.500h5v3H8V12z" fill="#d01219" /></>],
  ["Zoom Next", <><Glass muted flip /><path d="M21 8l-5-4v2.500h-5v3h5V12z" fill="#77766e" /></>],
  ["Refresh", <><circle cx="12" cy="12" r="10" fill="#4b86e6" stroke="#2d5fc4" strokeWidth="1.500" /><path d="M4 8c4-6 12-6 16 0-5 2-11 2-16 0z" fill="#9dbff5" /><path d="M16 8c-4-3-9-1-9 4s6 7 9 3v-3h-4" stroke="#fff" strokeWidth="2.800" /></>],
];

const Curve = () => <path d="M1 22V4q1-4 4-3 4 0 4 9v12M9 22l1-18q0-4 3-2 3 4 4 14 1 4 6 6z" fill="#d6d4c8" stroke="#aeaca1" />;

function SideButton({ label, children, active }: Kids & { label: string; active?: boolean }) {
  return (
    <button
      type="button"
      aria-label={label}
      className={
        active
          ? "flex h-[34px] w-[34px] items-center justify-center rounded-[3px] border border-[#85837a] bg-[#d6d3c6]"
          : "flex h-[34px] w-[34px] items-center justify-center"
      }
    >
      <Svg>{children}</Svg>
    </button>
  );
}

function SideBar() {
  return (
    <nav aria-label="Map tools" className="flex w-[39px] shrink-0 flex-col items-center border-r border-[#b5b2a4] pl-px">
      <div className="flex h-[9px] items-center"><Grip id="gv1" cls="h-[6px] w-[30px]" /></div>
      <SideButton label="Pan Map" active>
        <path d="M8 20c-2-3-5-5-5-7 1-2 3-1 4 1L5 6c0-2 2-2 3 0l1 4 0-6c0-2 2-2 3 0l1 6 1-5c0-2 3-1 3 0l-1 6 1-3c1-1 3 0 2 2l-1 6-2 4z" fill="#dff1fa" stroke="#101c22" strokeWidth="1.200" />
        <path d="M8 20l9 0 0 3H9z" fill="#6fb8de" />
        <path d="M9 19c-1-2-2-3-2-5 3 2 6 1 9-1l-1 6z" fill="#a9d8ef" />
      </SideButton>
      {navTools.map(([l, a]) => <SideButton key={l} label={l}>{a}</SideButton>)}
      <div className="flex h-[14px] items-end pb-px"><Grip id="gv2" cls="h-[6px] w-[30px]" /></div>
      <SideButton label="Local Stretch"><Curve /><path d="M1 11l6-5v3h10V6l6 5-6 5v-3H7v3z" fill="#d8d6ca" stroke="#a09e93" /></SideButton>
      <SideButton label="Full Stretch"><Curve /></SideButton>
      <div className="flex h-[15px] items-center"><Grip id="gv3" cls="h-[6px] w-[30px]" /></div>
      <SideButton label="Labeling">
        <text transform="translate(3 10) rotate(26)" fontSize="9" fill="#111" fontFamily="Liberation Sans, sans-serif">ABC</text>
        <path d="M2 10l17 10" stroke="#1583f0" strokeWidth="2" />
      </SideButton>
      <SideButton label="Move Label"><Tag /><circle cx="12" cy="12" r="5" fill="#f1efe4" /><path d="M12 3l3 4H9zM12 21l3-4H9zM3 12l4-3v6zM21 12l-4-3v6z" fill="#4d4c46" /></SideButton>
      <SideButton label="Rotate Label"><Tag /><path d="M3 14C1 6 8 2 15 4" stroke="#8f8e84" strokeWidth="1.500" /><path d="M8 12l6-3 4 4-5 5z" fill="#f1efe4" /></SideButton>
      <SideButton label="Change Label"><Tag /><path d="M2 3l4 4 4-1 1-4c4 2 4 6 2 9l9 9-3 3-9-9C6 14 1 9 2 3z" fill="#dddbcf" stroke="#98968c" /></SideButton>
    </nav>
  );
}

/* ---------- window ---------- */

const menus: [string, string, string][] = [
  ["", "F", "ile"], ["", "E", "dit"], ["", "V", "iew"], ["", "L", "ayer"], ["", "S", "ettings"], ["", "P", "lugins"],
  ["Vect", "o", "r"], ["", "R", "aster"], ["A", "n", "alysis"], ["", "D", "atabase"], ["", "H", "elp"],
];

function CaptionButton({ label, red, children }: Kids & { label: string; red?: boolean }) {
  return (
    <button
      type="button"
      aria-label={label}
      className={
        red
          ? "flex h-[21px] w-[21px] items-center justify-center rounded-[3px] border border-white bg-linear-to-br from-[#f0906e] via-[#e2512c] to-[#c8340f]"
          : "flex h-[21px] w-[21px] items-center justify-center rounded-[3px] border border-white bg-linear-to-br from-[#7ba2f2] via-[#2c62dc] to-[#1e50cc]"
      }
    >
      <svg width="15" height="15" viewBox="0 0 15 15" fill="none" stroke="#fff" aria-hidden="true">
        {children}
      </svg>
    </button>
  );
}

const cell = "flex h-[23px] shrink-0 items-center justify-center border border-[#8c897a] whitespace-nowrap";

export default function App() {
  return (
    <div className="flex min-h-screen flex-col rounded-t-lg bg-[#0a47dc] font-[Roboto,'Liberation_Sans',sans-serif] text-[11px] text-black">
      <header className="flex h-[30px] shrink-0 items-center rounded-t-lg bg-linear-to-b from-[#3f8cf3] via-[#0353e6] to-[#0560fb] pt-0.5 pr-[6px] pl-[7px]">
        <svg width="16" height="16" viewBox="0 0 16 16" aria-hidden="true">
          <path d="M3 3q5-3 8 0 2 4-1 9-5 3-8 0-1-5 1-9z" fill="#f3ea3c" stroke="#3d7a1c" strokeWidth="1.500" />
          <path d="M9 2l4-1-1 5-4 6-2 0 1-6z" fill="#3f7f2c" stroke="#1c3f10" strokeWidth=".7" /><path d="M5 5v6M9 12l4 3" stroke="#fff" strokeWidth="1.500" />
        </svg>
        <h1 className="flex-1 pt-0.5 pl-0.5 font-['DejaVu_Sans_Condensed'] text-[12px] font-bold text-white [text-shadow:1px_1px_1px_#0a2a8c]">
          Quantum GIS 1.8.0-Lisboa
        </h1>
        <div className="flex gap-0.5">
          <CaptionButton label="Minimize"><path d="M3 12h6" strokeWidth="3" /></CaptionButton>
          <CaptionButton label="Maximize"><path d="M2.500 2.500h10v10h-10z" /><path d="M2 3h11" strokeWidth="2.500" /></CaptionButton>
          <CaptionButton label="Close" red><path d="M3 3l9 9M12 3l-9 9" strokeWidth="2.200" /></CaptionButton>
        </div>
      </header>

      <div className="mx-1 mb-1 flex flex-1 flex-col bg-[#ece9d8]">
        <nav aria-label="Main menu" className="flex h-[23px] shrink-0 items-center gap-[14px] border-b border-[#b5b2a4] pt-[3px] pl-[9px]">
          {menus.map(([p, u, s]) => (
            <button key={p + u + s} type="button">{p}<u>{u}</u>{s}</button>
          ))}
        </nav>

        <div className="flex h-[39px] shrink-0 items-center border-b border-[#b5b2a4] pl-px">
          <Grip id="h1" vertical cls="mx-[3px] h-[30px] w-[5px]" />
          <Tools items={fileTools} />
          <Grip id="h2" vertical cls="mr-0.5 ml-[7px] h-[30px] w-[5px]" />
          <Tools items={editTools} />
          <Grip id="h3" vertical cls="mr-0.5 ml-[7px] h-[30px] w-[5px]" />
          <Tools items={grassTools} />
          <span className="mr-px h-[30px] w-0.5 border-r border-l border-r-white border-l-[#aaa798]" />
          <Tools items={grassTools2} />
        </div>

        <div className="flex h-[38px] shrink-0 items-center border-b border-[#b5b2a4] pl-px">
          <Grip id="h4" vertical cls="mx-[3px] h-[30px] w-[5px]" />
          <Tools items={pluginTools} />
          <Grip id="h5" vertical cls="mr-px ml-[7px] h-[30px] w-[5px]" />
          <Tool label="Identify Features"><Svg><Cursor x={2} y={4} /><circle cx="16" cy="7" r="5.500" fill="#2d66c8" stroke="#8fb0e6" /><path d="M16 3.500v1.500M16 6.500v4" stroke="#fff" strokeWidth="2" /></Svg></Tool>
          <Tool label="Run Feature Action"><Svg><Gear /></Svg></Tool>
          <Arrow label="Actions menu" muted />
          <Tool label="Select Features"><Svg><path d="M1 3c5-3 10-3 13 0 5-2 9 1 9 5v12c-4 4-9 2-12 2C3 24 0 18 2 14 0 10 0 6 1 3z" fill="#f6f2a0" stroke="#f2e53a" /><g transform="translate(-3 -4) scale(.9)"><Gear r={0.5} /></g><Cursor x={10} y={7} /></Svg></Tool>
          <Arrow label="Selection menu" />
          <Tool label="Deselect All"><Svg><path d="M2 4c5-4 10-3 13-1 5-2 8 1 8 5l-3 12C12 24 3 22 2 18 0 12 0 8 2 4z" fill="#f6f09a" stroke="#f5e82c" strokeWidth="1.500" /><Cursor x={11} y={7} /><circle cx="6" cy="16" r="4.500" stroke="#c8281c" strokeWidth="2" fill="#f6e9a0" /><path d="M3 13l6 6" stroke="#c8281c" strokeWidth="2" /></Svg></Tool>
          <Tool label="Attribute Table">
            <Svg><rect x="1.500" y="2.500" width="21" height="19" fill="#fff" stroke="#3b6fd0" /><path d="M1 4.500h22" stroke="#2a63d8" strokeWidth="4" /><path d="M4 9h4M4 12h4M4 15h4M4 18h4M10 9h10M10 12h10M10 15h10M10 18h10" stroke="#6b7f9c" /></Svg>
          </Tool>
          <Tool label="Measure Line">
            <Svg><path d="M1.500 3v4h21V3" stroke="#111" strokeWidth="2" /><rect x="1" y="11" width="22" height="11" fill="#7fb6d6" stroke="#1c2c38" strokeWidth="1.500" /><path d="M4 22v-4M7 22v-7M10 22v-4M13 22v-7M16 22v-4M19 22v-7" stroke="#1c2c38" /></Svg>
          </Tool>
          <Arrow label="Measure menu" />
          <Tool label="Map Tips">
            <Svg><path d="M5 2h14q3 0 3 3v8q0 3-3 3h-6l-5 6 1-6H5q-3 0-3-3V5q0-3 3-3z" fill="#f8f268" stroke="#1a1a1a" strokeWidth="1.600" /><path d="M8 7h11l-3 5H5z" fill="#3c8a9c" stroke="#15333c" /></Svg>
          </Tool>
          <Tool label="New Bookmark"><Svg><Home /><Star x={17} y={6} /></Svg></Tool>
          <Tool label="Show Bookmarks"><Svg><Home /></Svg></Tool>
          <Tool label="Text Annotation">
            <Svg><path d="M5 2h18v16H8l-6 4 3-6z" fill="#d0dcea" stroke="#a3afbe" /><text x="14" y="15" fontSize="13" textAnchor="middle" fontFamily="Liberation Serif, serif" fill="#333">T</text></Svg>
          </Tool>
          <Arrow label="Annotation menu" />
          <Grip id="h6" vertical cls="ml-[9px] h-[30px] w-[5px]" />
          <button type="button" className="ml-px w-8 text-center leading-[13px]">PIHM helper</button>
          <button type="button" className="ml-2.5 flex items-end pt-0.5 whitespace-nowrap">
            <span>Do<u>m</u>ain Decomposition</span>
            <svg width="5" height="3" viewBox="0 0 5 3" aria-hidden="true"><path d="M0 0h5L2.500 3z" /></svg>
          </button>
          <button type="button" className="ml-1.5 flex items-end pt-0.5 whitespace-nowrap">
            <span>D<u>a</u>taModel Loader</span>
            <svg width="5" height="3" viewBox="0 0 5 3" aria-hidden="true"><path d="M0 0h5L2.500 3z" /></svg>
          </button>
        </div>

        <main className="flex min-h-0 flex-1 pt-[3px]">
          <SideBar />
          <LayersDock />
          <div className="flex w-[7px] shrink-0 items-center justify-center">
            <SplitDots id="s1" />
          </div>
          <div className="min-w-0 flex-1 rounded-[3px] border-r-2 border-b-2 border-l border-[#c9c6b7]">
            <MapCanvas />
          </div>
          <div className="flex w-[6px] shrink-0 items-center justify-center">
            <SplitDots id="s2" />
          </div>
          <ToolboxDock />
        </main>

        <footer className="flex h-[26px] shrink-0 items-center gap-[3px] text-[11px]">
          <span className="flex-1" />
          <button type="button" aria-label="Toggle extents" className={`${cell} w-[23px]`}>
            <Svg s={18}><ellipse cx="8" cy="8" rx="5" ry="7" transform="rotate(-25 8 8)" fill="#e8e6da" stroke="#111" strokeWidth="2" /><path d="M5 9l7-3M8 2l2 5" stroke="#111" strokeWidth="1.500" /><path d="M10 14l11-9M2 20l5-4" stroke="#555" strokeDasharray="2 1" /><circle cx="14" cy="18" r="4.500" fill="#b9b7ab" stroke="#111" strokeWidth="2.500" /></Svg>
          </button>
          <label htmlFor="coord" className={`${cell} w-[65px]`}>Coordinate:</label>
          <input id="coord" defaultValue="-93.1098,44.4798" className="h-[23px] w-[303px] border-2 border-[#a5a293] bg-white text-center font-['Liberation_Sans']" />
          <label htmlFor="scale" className={`${cell} w-[39px]`}>Scale</label>
          <span className="relative flex h-[23px] w-[83px] items-center border-2 border-[#a5a293] bg-white">
            <select id="scale" className="h-full w-full appearance-none bg-white pl-0.5"><option>1:105359</option></select>
            <span className="pointer-events-none absolute inset-y-0 right-0 flex w-4 items-center justify-center bg-[#ece9d8]">
              <svg width="7" height="4" viewBox="0 0 7 4" aria-hidden="true"><path d="M0 0h7L3.500 4z" /></svg>
            </span>
          </span>
          <button type="button" aria-label="Stop rendering" className={`${cell} w-[23px]`}>
            <Svg s={20}><path d="M22 5L14 15" stroke="#98978d" strokeWidth="3" /><path d="M14 13q-4 1-5 9 7 0 9-6z" fill="#77766e" /><circle cx="7" cy="7" r="4.500" stroke="#dd3a34" strokeWidth="2" /><path d="M4 4l6 6" stroke="#dd3a34" strokeWidth="2" /></Svg>
          </button>
          <div className={`${cell} w-[62px]`}><Tick label="Render" defaultChecked /></div>
          <div className={`${cell} w-[64px]`}>EPSG:4326</div>
          <button type="button" aria-label="CRS status" className={`${cell} w-[23px]`}>
            <Svg s={18}><circle cx="12" cy="12" r="8.500" fill="#b4b3aa" stroke="#1b1b1b" strokeWidth="3.500" /><path d="M12 1v22M1 12h22" stroke="#1b1b1b" strokeWidth="2" /><circle cx="12" cy="12" r="4" fill="#98978f" /></Svg>
          </button>
          <button type="button" aria-label="Messages" className={`${cell} w-[23px] bg-white`}>
            <Svg s={16}><path d="M12 2l11 20H1z" fill="#f6ec1a" stroke="#85803a" strokeWidth="1.500" /><path d="M12 8v7M12 17v3" stroke="#000" strokeWidth="2.500" /></Svg>
          </button>
          <svg width="16" height="16" viewBox="0 0 16 16" className="self-end" aria-hidden="true">
            <path d="M3 16L16 3M7 16l9-9M11 16l5-5" stroke="#aaa798" strokeWidth="1.500" />
          </svg>
        </footer>
      </div>
    </div>
  );
}
